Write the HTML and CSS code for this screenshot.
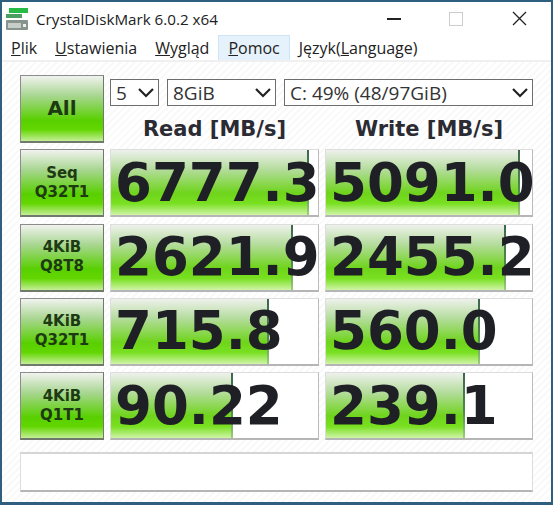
FILE: index.html
```html
<!DOCTYPE html>
<html lang="en">
<head>
  <meta charset="UTF-8" />
  <title>CrystalDiskMark 6.0.2 x64</title>
  <link rel="stylesheet" href="styles.css">
</head>
<body>
  <div class="window">
    <div class="titlebar">
      <svg class="app-icon" width="22" height="22" viewBox="0 0 22 22">
        <rect x="0" y="12" width="22" height="10" rx="1" fill="#87938d"/>
        <rect x="2" y="15" width="13" height="5" fill="#c6cec9"/>
        <rect x="17" y="16" width="3" height="3" fill="#eef2ef"/>
        <rect x="0" y="6" width="16" height="4" fill="#4a9f60"/>
        <rect x="3" y="0" width="19" height="5" fill="#27bb45"/>
      </svg>
      <span class="title">CrystalDiskMark 6.0.2 x64</span>
      <div class="controls">
        <span class="minimize"></span>
        <span class="maximize"></span>
        <svg class="close" width="15" height="15" viewBox="0 0 15 15">
          <path d="M1 1 L14 14 M14 1 L1 14" stroke="#222" stroke-width="1.3" fill="none"/>
        </svg>
      </div>
    </div>

    <div class="menu">
      <span class="menu-item"><u>P</u>lik</span>
      <span class="menu-item"><u>U</u>stawienia</span>
      <span class="menu-item"><u>W</u>ygląd</span>
      <span class="menu-item active"><u>P</u>omoc</span>
      <span class="menu-item">Język(<u>L</u>anguage)</span>
    </div>

    <div class="content">
      <div class="grid">
        <div class="btn all">All</div>
        <div class="top-right">
          <div class="selects">
            <div class="select s-count">5<svg class="chev" width="16" height="10" viewBox="0 0 16 10"><path d="M1 1 L8 8 L15 1" stroke="#222" stroke-width="2.2" fill="none"/></svg></div>
            <div class="select s-size">8GiB<svg class="chev" width="16" height="10" viewBox="0 0 16 10"><path d="M1 1 L8 8 L15 1" stroke="#222" stroke-width="2.2" fill="none"/></svg></div>
            <div class="select s-drive">C: 49% (48/97GiB)<svg class="chev" width="16" height="10" viewBox="0 0 16 10"><path d="M1 1 L8 8 L15 1" stroke="#222" stroke-width="2.2" fill="none"/></svg></div>
          </div>
          <div class="heads">
            <div class="head">Read [MB/s]</div>
            <div class="head">Write [MB/s]</div>
          </div>
        </div>

        <div class="btn">Seq<br>Q32T1</div>
        <div class="cell"><div class="bar" style="width: 95.6%"></div><span class="num">6777.3</span></div>
        <div class="cell"><div class="bar" style="width: 94.2%"></div><span class="num">5091.0</span></div>

        <div class="btn">4KiB<br>Q8T8</div>
        <div class="cell"><div class="bar" style="width: 88%"></div><span class="num">2621.9</span></div>
        <div class="cell"><div class="bar" style="width: 87.4%"></div><span class="num">2455.2</span></div>

        <div class="btn">4KiB<br>Q32T1</div>
        <div class="cell"><div class="bar" style="width: 76.3%"></div><span class="num">715.8</span></div>
        <div class="cell"><div class="bar" style="width: 74.8%"></div><span class="num">560.0</span></div>

        <div class="btn">4KiB<br>Q1T1</div>
        <div class="cell"><div class="bar" style="width: 59%"></div><span class="num">90.22</span></div>
        <div class="cell"><div class="bar" style="width: 67.5%"></div><span class="num">239.1</span></div>
      </div>
      <div class="status"></div>
    </div>
  </div>
</body>
</html>
```

FILE: styles.css
```css
* {
  box-sizing: border-box;
}
html, body {
  margin: 0;
  padding: 0;
}
body {
  width: 553px;
  height: 505px;
  overflow: hidden;
  background-color: #fff;
}
.window {
  width: 553px;
  height: 505px;
  border: 2px solid #2f5f7f;
  border-bottom-width: 3px;
  display: flex;
  flex-direction: column;
  font-family: "Open Sans", sans-serif;
  color: #222;
}

.titlebar {
  height: 33px;
  flex: none;
  display: flex;
  align-items: center;
  padding-left: 4px;
  background-color: #fff;
}
.app-icon {
  margin-right: 8px;
}
.title {
  font-size: 15.2px;
}
.controls {
  margin-left: auto;
  display: flex;
  align-items: center;
}
.minimize {
  width: 14px;
  height: 2px;
  background-color: #222;
  margin-right: 48px;
}
.maximize {
  width: 14px;
  height: 14px;
  border: 1px solid #ccc;
  margin-right: 49px;
}
.close {
  margin-right: 24px;
}

.menu {
  height: 27px;
  flex: none;
  display: flex;
  background-color: #fff;
  border-bottom: 2px solid #f0f0f0;
  font-size: 16px;
}
.menu-item {
  padding: 0 9px;
  line-height: 26px;
}
.menu-item.active {
  background-color: #e5f1fb;
  border: 1px solid #cce4f7;
  border-bottom: none;
  padding: 0 9px;
  line-height: 24px;
}

.content {
  flex: 1;
  padding: 13px 18px 0 18px;
  background: repeating-linear-gradient(135deg, #fff 0, #fff 3px, #f9f9f9 3px, #f9f9f9 5px);
}
.grid {
  display: grid;
  grid-template-columns: 84px 209px 208px;
  grid-auto-rows: 68px;
  column-gap: 6px;
  row-gap: 6.33px;
}
.btn {
  display: flex;
  align-items: center;
  justify-content: center;
  text-align: center;
  font-family: "DejaVu Sans", sans-serif;
  font-weight: bold;
  font-size: 15px;
  line-height: 19px;
  color: #1d3a12;
  border: 1px solid #8c8c8c;
  border-right-color: #6f7a6a;
  border-bottom: 2px solid #6f7a6a;
  background: linear-gradient(#f1f3ef 0%, #a9d692 30%, #58d000 68%, #62d600 82%, #c4ee96 100%);
}
.btn.all {
  font-size: 20px;
}
.top-right {
  grid-column: 2 / 4;
  display: flex;
  flex-direction: column;
}
.selects {
  display: flex;
  margin-top: 4px;
}
.select {
  height: 27px;
  display: flex;
  align-items: center;
  justify-content: space-between;
  padding: 0 4px 0 5px;
  border: 1px solid #6e6e6e;
  background-color: #fff;
  font-size: 19px;
  color: #333;
}
.s-count {
  width: 49px;
  margin-right: 8px;
}
.s-size {
  width: 109px;
  margin-right: 8px;
}
.s-drive {
  width: 249px;
}
.heads {
  display: grid;
  grid-template-columns: 209px 208px;
  column-gap: 6px;
}
.head {
  text-align: center;
  font-family: "DejaVu Sans", sans-serif;
  font-weight: bold;
  font-size: 21px;
  line-height: 30px;
  margin-top: 8px;
  color: #2b2b33;
}

.cell {
  position: relative;
  background-color: #fff;
  border: 1px solid #ddd;
  border-right-color: #bbb;
  border-bottom: 2px solid #b5b5b5;
  display: flex;
  align-items: center;
}
.bar {
  position: absolute;
  top: 0;
  left: 0;
  bottom: 0;
  background: linear-gradient(#eef1ec 0%, #b4dc9c 30%, #6fd41c 66%, #78e020 82%, #d0f4a8 100%);
}
.bar::after {
  content: "";
  position: absolute;
  top: 0;
  right: 0;
  bottom: 0;
  width: 2px;
  background: linear-gradient(#3f6650 0%, #4e8a4a 60%, #9ccf7c 100%);
}
.num {
  position: relative;
  padding-left: 4px;
  font-family: "DejaVu Sans", sans-serif;
  font-weight: bold;
  font-size: 53px;
  line-height: 60px;
  color: #1f1f26;
  white-space: nowrap;
}

.status {
  height: 40px;
  margin-top: 12px;
  background-color: #fff;
  border: 1px solid #ddd;
  border-top: 2px solid #d5d5d5;
  border-bottom: 2px solid #b5b5b5;
}
```
